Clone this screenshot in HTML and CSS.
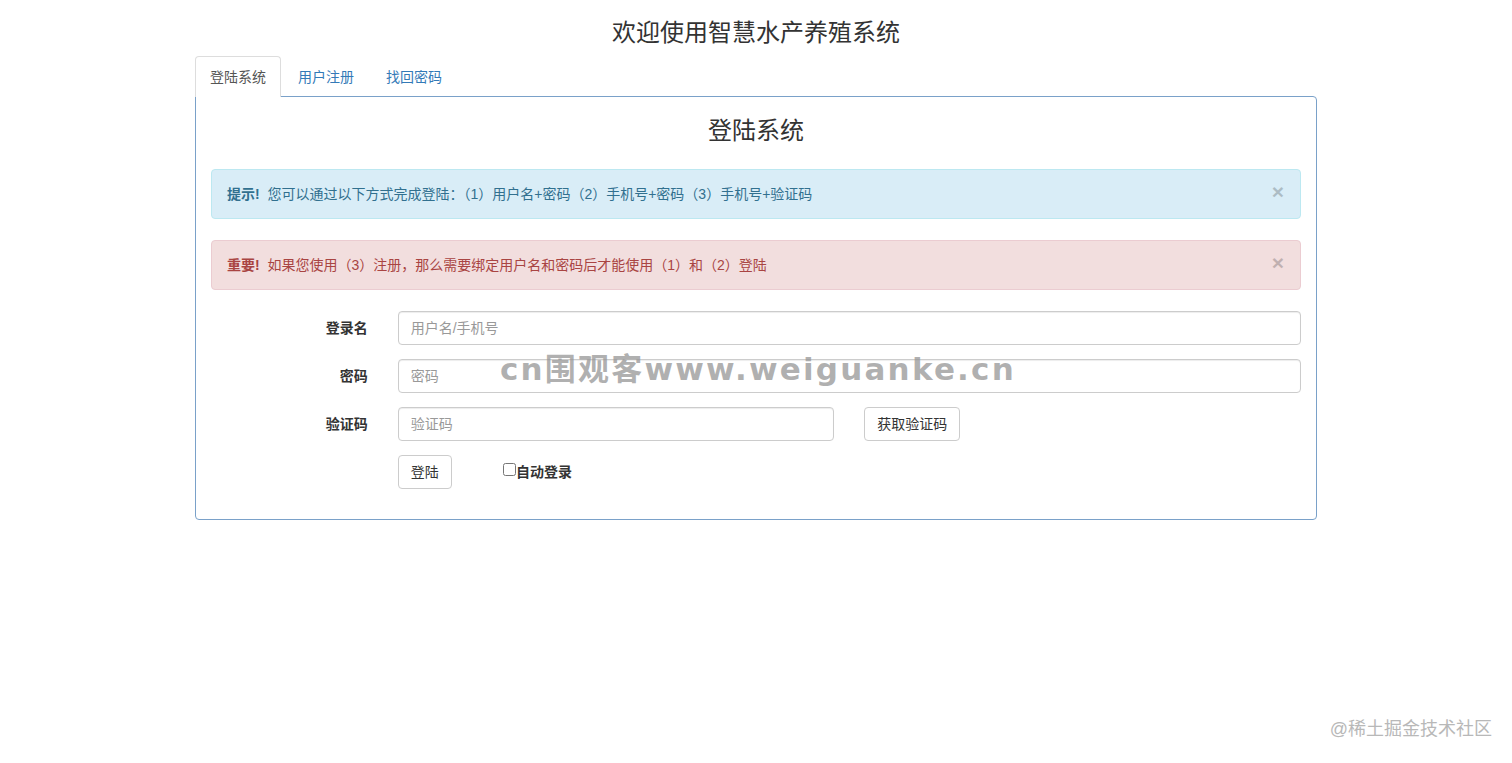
FILE: index.html
```html
<!DOCTYPE html>
<html lang="zh-CN">
<head>
  <meta charset="UTF-8" />
  <meta name="viewport" content="width=device-width, initial-scale=1.0"/>
  <title>智慧水产养殖系统</title>
  <link rel="stylesheet" href="styles.css">
</head>
<body>

  <div class="container">
    <h2 class="titulo">欢迎使用智慧水产养殖系统</h2>

    <ul class="nav-tabs">
      <li class="active"><a href="#login">登陆系统</a></li>
      <li><a href="#register">用户注册</a></li>
      <li><a href="#forget">找回密码</a></li>
    </ul>

    <div class="panel">
      <h3 class="panel-title">登陆系统</h3>

      <div class="alert alert-info">
        <span><strong>提示!</strong>&nbsp;&nbsp;您可以通过以下方式完成登陆：（1）用户名+密码（2）手机号+密码（3）手机号+验证码</span>
        <button class="close" type="button">&times;</button>
      </div>

      <div class="alert alert-danger">
        <span><strong>重要!</strong>&nbsp;&nbsp;如果您使用（3）注册，那么需要绑定用户名和密码后才能使用（1）和（2）登陆</span>
        <button class="close" type="button">&times;</button>
      </div>

      <form class="form-horizontal" onsubmit="return false">
        <div class="form-group">
          <label class="col-2 control-label" for="user">登录名</label>
          <div class="col-10"><input class="form-control" id="user" type="text" placeholder="用户名/手机号"></div>
        </div>
        <div class="form-group">
          <label class="col-2 control-label" for="pass">密码</label>
          <div class="col-10"><input class="form-control" id="pass" type="password" placeholder="密码"></div>
        </div>
        <div class="form-group">
          <label class="col-2 control-label" for="code">验证码</label>
          <div class="col-5"><input class="form-control" id="code" type="text" placeholder="验证码"></div>
          <div class="col-3"><button class="btn" type="button">获取验证码</button></div>
        </div>
        <div class="form-group">
          <div class="col-1 offset-2"><button class="btn" type="submit">登陆</button></div>
          <div class="col-3"><label class="checkbox"><input type="checkbox">自动登录</label></div>
        </div>
      </form>
    </div>
  </div>

  <div class="marca">cn围观客www.weiguanke.cn</div>
  <div class="rodape">@稀土掘金技术社区</div>

</body>
</html>
```

FILE: styles.css
```css
body {
  font-family: "Liberation Sans", "Noto Sans CJK SC", sans-serif;
  font-size: 14px;
  line-height: 20px;
  color: #333;
  margin: 0;
  background-color: #fff;
}

.container {
  width: 1122px;
  margin: 0 auto;
}

.titulo {
  font-size: 24px;
  font-weight: 400;
  line-height: 26px;
  text-align: center;
  margin: 20px 0 10px;
}

.nav-tabs {
  display: flex;
  list-style: none;
  margin: 0;
  padding: 0;
  margin-bottom: -1px;
  position: relative;
}

.nav-tabs li {
  margin-right: 2px;
}

.nav-tabs a {
  display: block;
  padding: 10px 14px;
  border: 1px solid transparent;
  border-bottom: none;
  border-radius: 4px 4px 0 0;
  color: #337ab7;
  text-decoration: none;
}

.nav-tabs li.active a {
  color: #555;
  background-color: #fff;
  border-color: #ddd;
}

.panel {
  border: 1px solid #7aa1c9;
  border-radius: 0 4px 4px 4px;
  padding: 4px 15px 15px;
}

.panel-title {
  font-size: 24px;
  font-weight: 400;
  line-height: 26px;
  text-align: center;
  margin: 17px 0 25px;
}

.alert {
  display: flex;
  align-items: flex-start;
  padding: 14px 15px;
  border: 1px solid transparent;
  border-radius: 4px;
  margin-bottom: 21px;
}

.alert span {
  flex: 1;
}

.alert-info {
  background-color: #d9edf7;
  border-color: #bce8f1;
  color: #31708f;
}

.alert-danger {
  background-color: #f2dede;
  border-color: #ebccd1;
  color: #a94442;
}

.close {
  background: none;
  border: none;
  padding: 0;
  font-family: "Liberation Sans", sans-serif;
  font-size: 21px;
  font-weight: bold;
  line-height: 1;
  color: #000;
  opacity: .2;
  cursor: pointer;
  margin: -3px 1px 0 0;
}

.form-horizontal {
  margin: 0 -15px;
}

.form-group {
  display: grid;
  grid-template-columns: repeat(12, 1fr);
  align-items: center;
  margin-bottom: 14px;
}

.form-group:last-child {
  margin-bottom: 15px;
}

.col-1, .col-2, .col-3, .col-5, .col-10 {
  padding: 0 15px;
}

.col-1 { grid-column: span 1; }
.col-2 { grid-column: span 2; }
.col-3 { grid-column: span 3; }
.col-5 { grid-column: span 5; }
.col-10 { grid-column: span 10; }
.offset-2 { grid-column: 3 / span 1; }

.control-label {
  font-weight: bold;
  text-align: right;
}

.form-control {
  display: block;
  width: 100%;
  box-sizing: border-box;
  height: 34px;
  padding: 6px 12px;
  font-family: inherit;
  font-size: 14px;
  color: #555;
  border: 1px solid #ccc;
  border-radius: 4px;
  box-shadow: inset 0 1px 1px rgba(0,0,0,.075);
}

.form-control::placeholder {
  color: #999;
}

.btn {
  height: 34px;
  padding: 6px 12px;
  font-family: inherit;
  font-size: 14px;
  line-height: 20px;
  color: #333;
  background-color: #fff;
  border: 1px solid #ccc;
  border-radius: 4px;
  cursor: pointer;
}

.checkbox {
  display: flex;
  align-items: flex-start;
  font-weight: bold;
  margin-left: 12px;
}

.checkbox input {
  margin: 1px 0 0;
  width: 13px;
  height: 13px;
}

.marca {
  position: absolute;
  top: 349px;
  left: 500px;
  font-family: "DejaVu Sans", "Noto Sans CJK SC", sans-serif;
  font-size: 31px;
  font-weight: bold;
  line-height: 40px;
  color: rgba(150,150,150,.75);
  letter-spacing: 2.2px;
  white-space: nowrap;
  pointer-events: none;
}

.rodape {
  position: absolute;
  right: 20px;
  top: 719px;
  font-size: 18px;
  color: #b8b8b8;
}
```
